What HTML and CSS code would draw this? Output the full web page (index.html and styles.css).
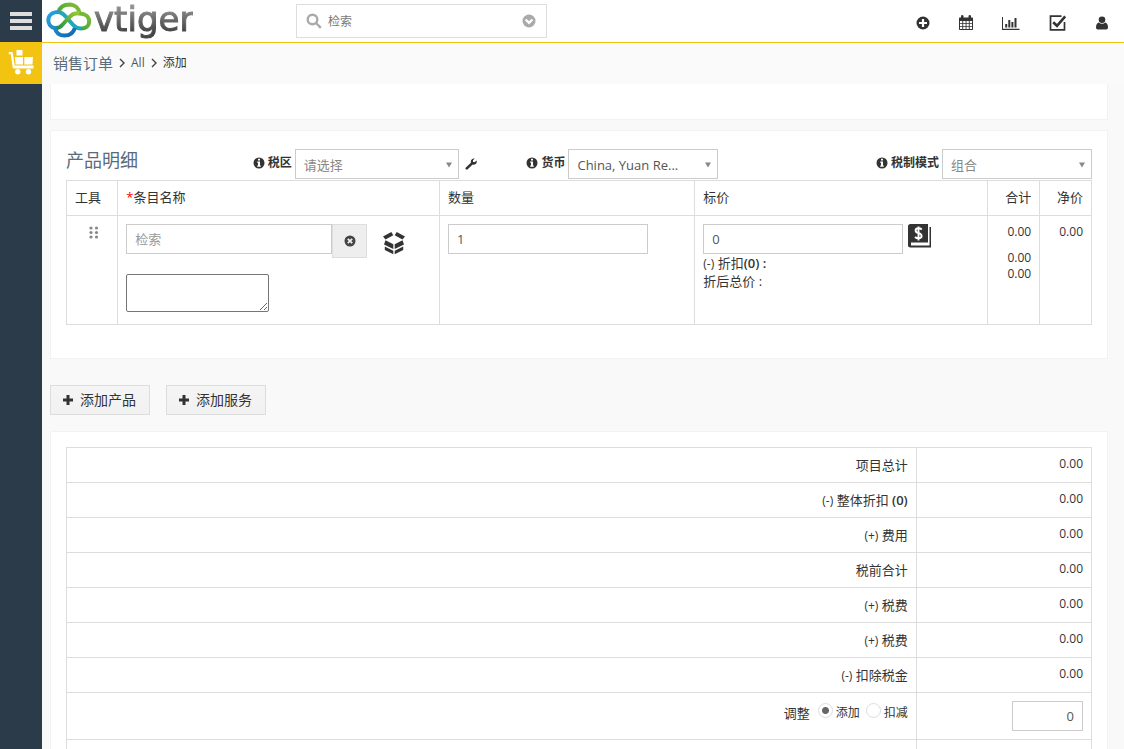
FILE: index.html
```html
<!DOCTYPE html>
<html lang="zh-CN">
<head>
<meta charset="utf-8">
<title>销售订单</title>
<link rel="stylesheet" href="styles.css">
</head>
<body>
<svg class="defs" aria-hidden="true">
  <symbol id="info" viewBox="0 0 12 12"><circle cx="6" cy="6" r="5.5"/><path fill="#fff" d="M5 1.8h2v1.7H5zM4.2 4.5H7v4h.8v1.3H4.2V8.5H5V5.7h-.8z"/></symbol>
  <symbol id="plus" viewBox="0 0 12 12"><path d="M4.500 1h3v3.500H11v3H7.500V11h-3V7.500H1v-3h3.500z"/></symbol>
  <symbol id="arrow" viewBox="0 0 8 6"><path d="M1 0.500h6L4 5.500z"/></symbol>
</svg>
<div class="app">
  <aside class="side">
    <button class="menu" type="button" aria-label="菜单"><svg width="22" height="20" viewBox="0 0 22 20"><path d="M0 1h22v4H0zM0 8h22v4H0zM0 15h22v4H0z"/></svg></button>
    <a class="module" href="#" aria-label="销售订单"><svg width="26" height="26" viewBox="0 0 26 26"><path d="M.8 3.200h2.900L5.700 16.500" fill="none" stroke="#fff" stroke-width="2.200"/><path d="M8.500 0h6v5.500h-6zM7 7h8v7.500H7.500zM16.300 7h8.700l-.5 7.500h-8.200zM4.800 15.500H25.500v3H4.800z"/><circle cx="9.800" cy="21.800" r="2.700"/><circle cx="20.500" cy="21.800" r="2.700"/></svg></a>
  </aside>
  <div class="page">
    <header class="top">
      <a class="logo" href="#">
        <svg width="46" height="36" viewBox="0 0 46 36" fill="none" stroke-width="4" aria-hidden="true">
          <defs>
            <linearGradient id="blue" x1="0" y1="0" x2="1" y2="1"><stop offset="0" stop-color="#27a5dd"/><stop offset="1" stop-color="#1268ae"/></linearGradient>
            <linearGradient id="green" x1="0" y1="1" x2="1" y2="0"><stop offset="0" stop-color="#1b8f4a"/><stop offset="1" stop-color="#9bca2f"/></linearGradient>
          </defs>
          <path stroke="#20a7bd" d="M11.500 10c3.500 0 6 2 8.300 4.700l7.400 8.300c2 2.200 4.500 3.600 7.800 3.600"/>
          <path stroke="url(#green)" d="M12.500 10C14 4.500 18.500 2.400 23.500 2.400c6 .2 9.600 4.200 10 9C39.500 11.600 43.200 14.800 43.200 19.300c0 4.500-3.600 7.300-8.200 7.300"/>
          <path stroke="url(#green)" d="M33.500 11.400c-4.500-.8-7.500.8-10 3.600l-7.300 8c-1.900 2.200-4.400 3.400-7.200 3"/>
          <path stroke="url(#blue)" d="M12.500 10C6 10 2.500 13.500 2.300 17.800 2.100 22 4.800 25.300 9 26.200c.8 4.700 4.500 7.400 9.500 7.400 5 0 9-2.800 10.300-7.600"/>
        </svg>
        <span>vtiger</span>
      </a>
      <div class="search">
        <svg width="16" height="16" viewBox="0 0 16 16" fill="none" stroke="#aaa" stroke-width="2.400"><circle cx="6.500" cy="6.500" r="4.800"/><path d="M10 10l4.800 4.800"/></svg>
        <input type="text" placeholder="检索" aria-label="检索">
        <button type="button" aria-label="高级检索"><svg width="14" height="14" viewBox="0 0 14 14"><circle cx="7" cy="7" r="6.500" fill="#aaa"/><path d="M3.600 5.500L7 8.900l3.400-3.400" fill="none" stroke="#fff" stroke-width="2.200"/></svg></button>
      </div>
      <nav class="tools">
        <button type="button" aria-label="新建"><svg width="14" height="14" viewBox="0 0 14 14"><circle cx="7" cy="7" r="6.500"/><path d="M5.900 3h2.200v2.900H11v2.200H8.100V11H5.900V8.100H3V5.900h2.900z" fill="#fff"/></svg></button>
        <button type="button" aria-label="日历"><svg width="14" height="16" viewBox="0 0 14 16"><path fill-rule="evenodd" d="M0 3.200Q0 2.400.8 2.400H2V1.200Q2 0 3.200 0T4.500 1.200V2.400h5V1.200Q9.500 0 10.800 0T12 1.200v1.200h1.200q.8 0 .8.800v11q0 .8-.8.800H.8q-.8 0-.8-.8zM1 6v2.200h2.300V6zm3.200 0v2.200h2.400V6zm3.300 0v2.200h2.300V6zm3.200 0v2.200H13V6zM1 9v2.200h2.300V9zm3.200 0v2.200h2.400V9zm3.300 0v2.200h2.300V9zm3.200 0v2.200H13V9zM1 12v2h2.300v-2zm3.200 0v2h2.400v-2zm3.300 0v2h2.300v-2zm3.200 0v2H13v-2z"/></svg></button>
        <button type="button" aria-label="报表"><svg width="18" height="14" viewBox="0 0 18 14"><path d="M0 1h1v11.700h16.500V14H0zM3.200 8h2v3.500h-2zM6.300 4h2v7.500h-2zM9.400 6h2v5.500h-2zM12.500 2h2v9.500h-2z"/></svg></button>
        <button type="button" aria-label="任务"><svg width="18" height="16" viewBox="0 0 18 16"><path d="M12.500 1.200H1.500v13.600h14V7" fill="none" stroke="#333" stroke-width="1.700"/><path d="M4.200 7.200l3.800 3.600L16.200 1.300" fill="none" stroke="#333" stroke-width="2.600"/></svg></button>
        <button type="button" aria-label="用户"><svg width="12" height="14" viewBox="0 0 12 14"><circle cx="6" cy="3.700" r="3.300"/><path d="M2.600 6.500Q6 9 9.400 6.500 12 7.500 12 11.500 12 13.500 10.200 13.500H1.800Q0 13.500 0 11.500 0 7.500 2.600 6.500z"/></svg></button>
      </nav>
    </header>
    <div class="crumbs">
      <a class="crumb-main" href="#">销售订单</a>
      <svg width="6" height="10" viewBox="0 0 6 10"><path d="M1 1l4 4-4 4"/></svg>
      <a href="#">All</a>
      <svg width="6" height="10" viewBox="0 0 6 10"><path d="M1 1l4 4-4 4"/></svg>
      <span>添加</span>
    </div>
    <main class="content">
      <section class="block stub"></section>
      <section class="block items">
        <div class="options">
          <h2>产品明细</h2>
          <div class="option">
            <label for="region"><svg class="ic" width="12" height="12"><use href="#info"/></svg>税区</label>
            <div class="pick wide"><select id="region"><option>请选择</option></select><svg class="tri" width="8" height="6"><use href="#arrow"/></svg></div>
            <button class="bare wrench" type="button" aria-label="设置"><svg width="12" height="12" viewBox="0 0 12 12"><path d="M1.800 10.400L7 5.400" stroke="#333" stroke-width="2.600" stroke-linecap="round"/><path d="M9.800.6L8 2.200v1.900h1.900L11.600 2.500Q12.300 5 10.300 6.300 8.500 7.300 6.800 6 5.100 4.300 6.200 2 7.500 0 9.800.6z"/></svg></button>
          </div>
          <div class="option">
            <label for="currency"><svg class="ic" width="12" height="12"><use href="#info"/></svg>货币</label>
            <div class="pick"><select id="currency" class="filled"><option>China, Yuan Re...</option></select><svg class="tri" width="8" height="6"><use href="#arrow"/></svg></div>
          </div>
          <div class="option end">
            <label for="mode"><svg class="ic" width="12" height="12"><use href="#info"/></svg>税制模式</label>
            <div class="pick"><select id="mode"><option>组合</option></select><svg class="tri" width="8" height="6"><use href="#arrow"/></svg></div>
          </div>
        </div>
        <table class="grid lines">
          <colgroup><col class="c-tool"><col class="c-name"><col class="c-qty"><col class="c-price"><col class="c-sum"><col class="c-sum"></colgroup>
          <thead><tr><th>工具</th><th><span class="req">*</span>条目名称</th><th>数量</th><th>标价</th><th class="num">合计</th><th class="num">净价</th></tr></thead>
          <tbody><tr>
            <td><svg class="drag" width="10" height="13" viewBox="0 0 10 13"><circle cx="2" cy="2" r="1.600"/><circle cx="7.500" cy="2" r="1.600"/><circle cx="2" cy="6.500" r="1.600"/><circle cx="7.500" cy="6.500" r="1.600"/><circle cx="2" cy="11" r="1.600"/><circle cx="7.500" cy="11" r="1.600"/></svg></td>
            <td>
              <div class="finder">
                <input class="field" type="text" placeholder="检索" aria-label="条目名称">
                <button class="clear" type="button" aria-label="清除"><svg width="12" height="12" viewBox="0 0 12 12"><circle cx="6" cy="6" r="5.500"/><path d="M3.800 3.800l4.400 4.400M8.200 3.800L3.800 8.200" stroke="#eee" stroke-width="1.800"/></svg></button>
                <button class="bare box" type="button" aria-label="产品"><svg width="24" height="24" viewBox="0 0 24 24"><path d="M1 5.500L9.300 1l2 3.200L3.500 8.500zM23 5.500L14.700 1l-2 3.200 7.800 4.300zM3.500 9.300l7.800 4v4.700L2 13.500zM20.500 9.300l-7.800 4v4.700l9.300-4.500zM2.800 15.500l8.500 4.200v3.500l-8.500-4.300zM21.200 15.500l-8.500 4.200v3.500l8.500-4.300z"/></svg></button>
              </div>
              <textarea class="note" aria-label="说明"></textarea>
            </td>
            <td><input class="field fixed" type="text" value="1" aria-label="数量"></td>
            <td>
              <div class="price"><input class="field fixed" type="text" value="0" aria-label="标价"><button class="bare" type="button" aria-label="价目表"><svg width="24" height="24" viewBox="0 0 24 24"><path d="M2.500 0H20v18.500H3v3h18.500V3H23v20.500H2.500Q0 23.500 0 21V2.500Q0 0 2.500 0z"/><path d="M13.800 5.500Q12.500 4.300 10.500 4.300 7.600 4.300 7.600 6.500 7.600 8.300 10.500 9.100 13.600 9.900 13.600 12.100 13.600 14.300 10.500 14.300 8.300 14.300 7 13M10.500 2.500v14" fill="none" stroke="#fff" stroke-width="1.900"/></svg></button></div>
              <div class="line"><small>(-)</small> 折扣<b>(0) :</b></div>
              <div class="line">折后总价 :</div>
            </td>
            <td class="num"><div>0.00</div><div class="later">0.00</div><div>0.00</div></td>
            <td class="num">0.00</td>
          </tr></tbody>
        </table>
      </section>
      <div class="actions">
        <button type="button"><svg width="12" height="12"><use href="#plus"/></svg>添加产品</button>
        <button type="button"><svg width="12" height="12"><use href="#plus"/></svg>添加服务</button>
      </div>
      <section class="block totals">
        <table class="sums lines">
          <colgroup><col><col class="c-value"></colgroup>
          <tbody>
            <tr><th>项目总计</th><td>0.00</td></tr>
            <tr><th><small>(-)</small> 整体折扣 <b>(0)</b></th><td>0.00</td></tr>
            <tr><th><small>(+)</small> 费用</th><td>0.00</td></tr>
            <tr><th>税前合计</th><td>0.00</td></tr>
            <tr><th><small>(+)</small> 税费</th><td>0.00</td></tr>
            <tr><th><small>(+)</small> 税费</th><td>0.00</td></tr>
            <tr><th><small>(-)</small> 扣除税金</th><td>0.00</td></tr>
            <tr><th><div class="adjust"><span>调整</span><label><input type="radio" name="adj" checked>添加</label><label><input type="radio" name="adj">扣减</label></div></th><td class="entry"><input class="field amount" type="text" value="0" aria-label="调整"></td></tr>
            <tr><th></th><td></td></tr>
          </tbody>
        </table>
      </section>
    </main>
  </div>
</div>
</body>
</html>
```
FILE: styles.css
```css
* { box-sizing: border-box; }
body {
  margin: 0;
  font: 13px/18px "Open Sans", "Noto Sans CJK SC", sans-serif;
  color: #333;
  background: #f9f9f9;
}
button, input, select, textarea { font: inherit; color: inherit; }
button { cursor: pointer; }
a { color: inherit; text-decoration: none; }
svg { display: block; flex: none; }
svg:not([fill]) { fill: #333; }
.defs { position: absolute; width: 0; height: 0; }

.app { display: flex; height: 100vh; overflow: hidden; }
.side { flex: 0 0 42px; background: #2c3b49; }
.menu, .module {
  display: flex;
  align-items: center;
  justify-content: center;
  width: 42px;
  height: 42px;
  padding: 0;
  border: 0;
  background: none;
}
.menu svg:not([fill]) { fill: #ddd; }
.module { background: #f2c311; }
.module svg:not([fill]) { fill: #fff; }
.page { flex: 1; min-width: 0; display: flex; flex-direction: column; }

.top {
  display: flex;
  align-items: center;
  height: 43px;
  flex: none;
  background: #fff;
  border-bottom: 1px solid #f2c311;
}
.logo { display: flex; align-items: center; width: 254px; padding: 0 0 2px 4px; height: 42px; }
.logo span {
  margin-left: 2px;
  padding-bottom: 2px;
  font: 34px/38px "DejaVu Sans", sans-serif;
  color: transparent;
  -webkit-text-stroke: 1px transparent;
  background: linear-gradient(#999 10%, #444 80%);
  background-clip: text;
  -webkit-background-clip: text;
}
.search {
  display: flex;
  align-items: center;
  width: 251px;
  height: 34px;
  padding: 0 10px 0 9px;
  border: 1px solid #ddd;
}
.search input { flex: 1; min-width: 0; border: 0; outline: 0; padding: 2px 6px 0; font-size: 12px; background: none; }
.search input::placeholder { color: #777; }
.search button, .tools button, .bare { padding: 0; border: 0; background: none; }
.tools { display: flex; align-items: center; gap: 29px; margin-left: auto; padding: 3px 16px 0 0; }

.crumbs {
  display: flex;
  align-items: center;
  gap: 6px;
  flex: none;
  height: 41px;
  padding: 0 11px 2px;
  font-size: 12px;
  background: #fafafa;
}
.crumbs svg:not([fill]) { fill: none; stroke: #444; stroke-width: 1.400; }
.crumbs a { color: #555; }
.crumbs .crumb-main { font-size: 15px; color: #5a6b7b; }

.content { flex: 1; min-height: 0; overflow: hidden; padding: 0 16px 0 8px; }
.block { background: #fff; border: 1px solid #f2f2f2; padding: 15px; }
.stub { height: 36px; border-top: 0; }
.items { margin-top: 10px; padding: 18px 15px 33px; }
.options { display: grid; grid-template-columns: 187fr 274fr 191fr 374fr; align-items: start; height: 31px; }
.options h2 { margin: 0; font-size: 18px; line-height: 22px; font-weight: 400; color: #5a6b7b; }
.option { display: flex; align-items: center; }
.option label { display: flex; align-items: center; gap: 3px; margin-right: 3px; padding-bottom: 2px; font-size: 12px; font-weight: 700; white-space: nowrap; }
.end { justify-content: flex-end; }
.pick { position: relative; width: 150px; flex: none; }
.pick.wide { width: 164px; }
.pick select {
  display: block;
  width: 100%;
  height: 30px;
  padding: 2px 20px 0 8px;
  border: 1px solid #ccc;
  border-radius: 0;
  background: #fff;
  appearance: none;
  color: #888;
}
.pick select.filled { color: #555; }
.tri:not([fill]) { position: absolute; right: 6px; top: 13px; fill: #888; pointer-events: none; }
.wrench { margin-left: 6px; }

.lines { width: 100%; border-collapse: collapse; table-layout: fixed; }
.lines th, .lines td { border: 1px solid #ddd; padding: 8px; text-align: left; font-weight: 400; vertical-align: top; }
.grid thead th { padding: 7px 8px 9px; }
.c-tool { width: 5%; }
.c-name { width: 31.400%; }
.c-qty { width: 24.900%; }
.c-price { width: 28.600%; }
.c-sum { width: 5.050%; }
.grid tbody tr { height: 109px; }
.lines .num { text-align: right; }
.lines td.num { font-size: 12px; line-height: 16px; }
.later { margin-top: 10px; }
.req { color: #f00; }
.drag:not([fill]) { margin: 2px 0 0 14px; fill: #888; }
.field { height: 30px; padding: 0 8px; border: 1px solid #ccc; border-radius: 0; background: #fff; color: #555; outline: 0; }
.field::placeholder { color: #999; }
.fixed { width: 200px; display: block; }
.finder { display: flex; align-items: flex-start; }
.finder .field { width: 206px; }
.clear { display: flex; align-items: center; justify-content: center; width: 35px; height: 34px; padding: 0; border: 1px solid #ddd; background: #eee; }
.clear svg:not([fill]) { fill: #444; }
.box { margin: 7px 0 0 15px; }
.note { display: block; width: 143px; height: 38px; margin-top: 16px; border: 1px solid #767676; border-radius: 2px; background: #fff; resize: both; }
.price { display: flex; align-items: flex-start; gap: 5px; }
small { font-size: 12px; line-height: 1; }
b { font-weight: 600; }
.line { height: 18px; }

.actions { display: flex; gap: 16px; padding: 26px 0 16px; }
.actions button {
  display: flex;
  align-items: center;
  gap: 6px;
  height: 30px;
  padding: 0 12px 0 11px;
  min-width: 100px;
  border: 1px solid #ddd;
  background: linear-gradient(#f5f5f5, #f1f1f1);
  font-size: 14px;
}
.lines.sums th, .lines.sums td { height: 35px; padding-bottom: 7px; text-align: right; }
.lines.sums td { padding-top: 7px; font-size: 12px; }
.c-value { width: 17.100%; }
.adjust { display: flex; justify-content: flex-end; align-items: center; gap: 6px; padding-top: 2px; }
.adjust span { margin-right: 2px; }
.adjust label { display: flex; align-items: center; gap: 3px; font-size: 12px; }
.adjust input {
  appearance: none;
  width: 15px;
  height: 15px;
  margin: 0 0 4px;
  border: 1px solid #ddd;
  border-radius: 50%;
  background: #fff;
}
.adjust input:checked { background: radial-gradient(circle, #666 0 3px, #fff 4px); }
.lines.sums .entry { height: 47px; padding: 8px; font-size: 13px; }
.amount { width: 71px; text-align: right; display: block; margin-left: auto; }
```
